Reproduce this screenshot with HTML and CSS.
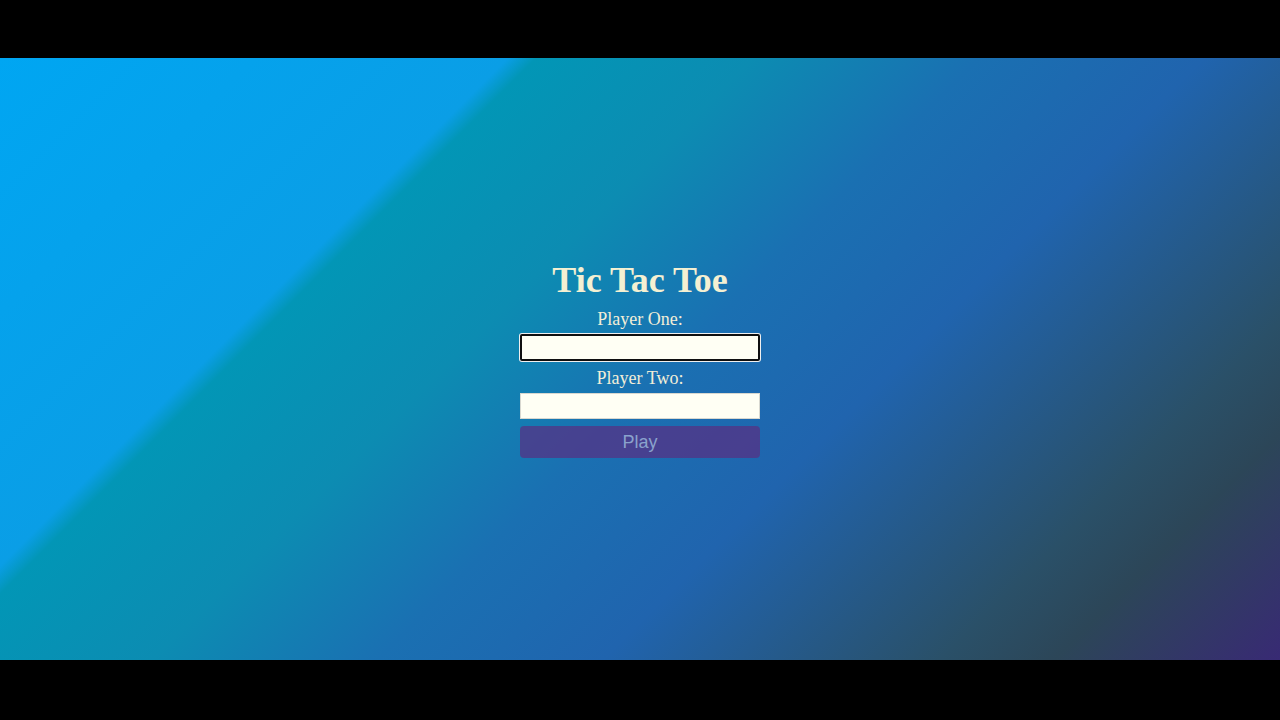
FILE: index.html
```html
<!DOCTYPE html>
<html>
<head>
<meta charset="utf-8">
<title>Tic Tac Toe</title>
<link rel="stylesheet" href="styles.css">
</head>
<body>
<main class="stage">
  <form class="setup">
    <h1 class="title">Tic Tac Toe</h1>
    <label class="label" for="p1">Player One:</label>
    <input class="field" id="p1" type="text" value="" autofocus>
    <label class="label" for="p2">Player Two:</label>
    <input class="field" id="p2" type="text" value="">
    <button class="play" type="button">Play</button>
  </form>
</main>
</body>
</html>
```
FILE: styles.css
```css
html, body {
  margin: 0;
  padding: 0;
  background: #000;
  height: 100%;
}
.stage {
  margin-top: 58px;
  height: 602px;
  display: flex;
  align-items: center;
  justify-content: center;
  background: linear-gradient(135deg,
    #00a6f2 0%,
    #0a9ee6 27%,
    #0296b6 28.5%,
    #0c8cb2 40%,
    #1a70b2 52%,
    #2064ae 64%,
    #2a5068 82%,
    #2c4658 88%,
    #382a74 100%);
}
.setup {
  display: flex;
  flex-direction: column;
  align-items: center;
  width: 240px;
  font-family: "Liberation Serif", "Times New Roman", serif;
}
.title {
  margin: 0 0 8px;
  font-size: 36px;
  line-height: 40px;
  font-weight: bold;
  color: #f4f0d2;
}
.label {
  font-size: 18px;
  line-height: 22px;
  color: #f2eed8;
  margin-bottom: 4px;
}
.field {
  box-sizing: border-box;
  width: 240px;
  height: 26px;
  margin: 0 0 6px;
  border: 1px solid #d8d8d0;
  background: #fffff4;
  padding: 0 6px;
  font-family: "Liberation Sans", Arial, sans-serif;
  font-size: 14px;
  color: #111;
  caret-color: #111;
  outline: none;
}
.field:focus {
  height: 27px;
  border: 2px solid #101010;
  border-radius: 2px;
  box-shadow: 0 0 0 1px #f0f0f0;
}
.field + .play {
  margin-top: 1px;
}
.play {
  box-sizing: border-box;
  width: 240px;
  height: 32px;
  border: none;
  border-radius: 4px;
  background: rgba(90, 46, 130, 0.7);
  color: #8aa2cc;
  font-family: "Liberation Sans", Arial, sans-serif;
  font-size: 18px;
}
```
